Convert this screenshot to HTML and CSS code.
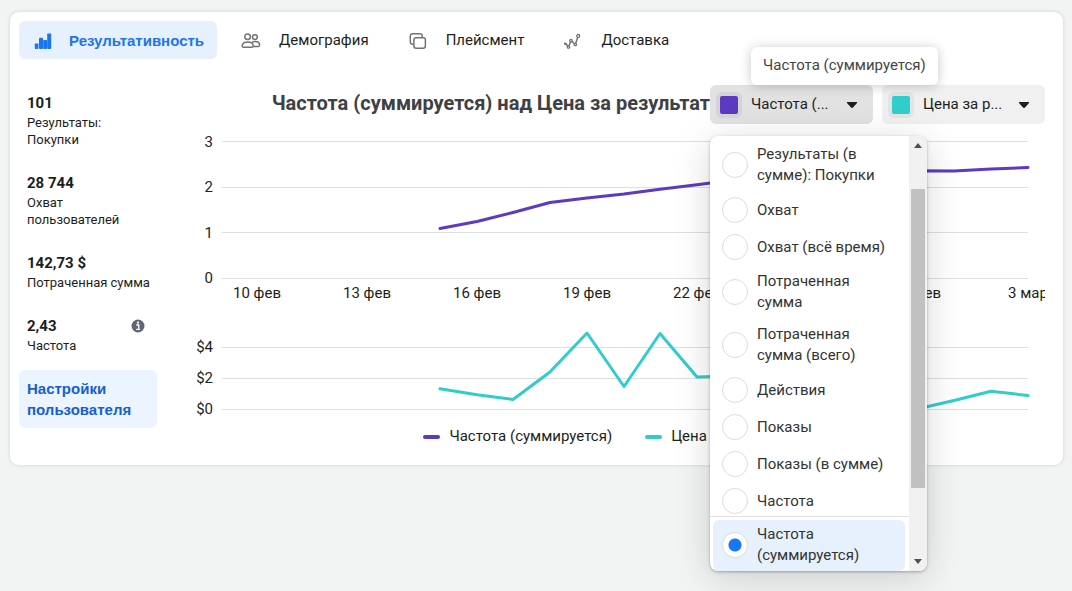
FILE: index.html
```html
<!DOCTYPE html>
<html lang="ru">
<head>
<meta charset="utf-8">
<title>Результативность</title>
<link rel="stylesheet" href="styles.css">
</head>
<body>
<main class="card">
  <nav class="tabs">
    <button class="tab tab-active" type="button">
      <svg class="tab-icon" viewBox="0 0 20 20" aria-hidden="true"><g fill="#1b74f0"><rect x="1.800" y="12.500" width="3.600" height="5.500" rx="0.800"/><rect x="6" y="6.700" width="4" height="11.300" rx="0.900"/><rect x="10.200" y="9" width="3.800" height="9" rx="0.800"/><rect x="14.200" y="2.400" width="4" height="15.600" rx="0.900"/></g></svg>
      <span>Результативность</span>
    </button>
    <button class="tab" type="button">
      <svg class="tab-icon" viewBox="0 0 20 20" aria-hidden="true"><g fill="none" stroke="#737373" stroke-width="1.500"><circle cx="6.600" cy="5.800" r="2.800"/><circle cx="13.900" cy="6.100" r="2.400"/><path d="M2.500 16.200h8.400c.8 0 1.300-.6 1.300-1.300 0-2.500-2.400-4-5.500-4s-5.500 1.500-5.500 4c0 .7.500 1.300 1.300 1.300z"/><path d="M11 11.300c.9-.5 1.900-.7 3-.7 2.700 0 4.600 1.400 4.600 3.500 0 .8-.5 1.300-1.200 1.300h-5.200"/></g></svg>
      <span>Демография</span>
    </button>
    <button class="tab" type="button">
      <svg class="tab-icon" viewBox="0 0 20 20" aria-hidden="true"><g fill="none" stroke="#737373" stroke-width="1.500"><path d="M5.500 13.200h-1a2.200 2.200 0 0 1-2.200-2.200v-6a2.200 2.200 0 0 1 2.200-2.200h7.500a2.200 2.200 0 0 1 2.200 2.200v1.500"/><rect x="5.900" y="6.800" width="11.500" height="10.400" rx="2.200"/></g></svg>
      <span>Плейсмент</span>
    </button>
    <button class="tab" type="button">
      <svg class="tab-icon" viewBox="0 0 20 20" aria-hidden="true"><g fill="none" stroke="#737373" stroke-width="1.500"><path d="M1.200 12.500l1.800.5 2.500 3 2.500-6.500 4.300 4 2.700-8"/></g><g fill="#fff" stroke="#737373" stroke-width="1.300"><circle cx="5.500" cy="16" r="1.200"/><circle cx="8" cy="9.600" r="1.200"/><circle cx="12.300" cy="13.500" r="1.200"/><circle cx="15.200" cy="5" r="1.500"/></g><circle cx="2.200" cy="12.800" r="1.300" fill="#737373"/></svg>
      <span>Доставка</span>
    </button>
  </nav>

  <div class="content">
    <aside class="side">
      <dl class="metrics">
        <div class="metric"><dt>101</dt><dd>Результаты: Покупки</dd></div>
        <div class="metric"><dt>28 744</dt><dd>Охват пользователей</dd></div>
        <div class="metric"><dt>142,73 $</dt><dd>Потраченная сумма</dd></div>
        <div class="metric">
          <dt>2,43
            <svg class="info" viewBox="0 0 14 14" aria-hidden="true"><circle cx="7" cy="7" r="6.500" fill="#606770"/><circle cx="7" cy="3.700" r="1.100" fill="#fff"/><path d="M5.300 6h2.500v4.200M5.200 10.400h3.700" fill="none" stroke="#fff" stroke-width="1.300"/></svg>
          </dt>
          <dd>Частота</dd>
        </div>
      </dl>
      <button class="settings" type="button">Настройки пользователя</button>
    </aside>

    <section class="chart">
      <header class="chart-head">
        <h2 class="title">Частота (суммируется) над Цена за результат</h2>
        <div class="pickers">
          <div class="picker-wrap">
            <button class="picker picker-open" type="button" aria-expanded="true">
              <span class="swatch swatch-a"></span><span class="picker-text">Частота (...</span>
              <svg class="caret" viewBox="0 0 12 8" aria-hidden="true"><path d="M1.500 1h9q1 0 .5 1l-4 4.500q-1 .8-2 0l-4-4.500q-.5-1 .5-1z" fill="#1c1e21"/></svg>
            </button>
            <div class="tooltip" role="tooltip">Частота (суммируется)</div>
            <div class="menu">
              <div class="options">
                <div class="option-list">
                  <label class="option"><input type="radio" name="metric">Результаты (в сумме): Покупки</label>
                  <label class="option"><input type="radio" name="metric">Охват</label>
                  <label class="option"><input type="radio" name="metric">Охват (всё время)</label>
                  <label class="option"><input type="radio" name="metric">Потраченная сумма</label>
                  <label class="option"><input type="radio" name="metric">Потраченная сумма (всего)</label>
                  <label class="option"><input type="radio" name="metric">Действия</label>
                  <label class="option"><input type="radio" name="metric">Показы</label>
                  <label class="option"><input type="radio" name="metric">Показы (в сумме)</label>
                  <label class="option"><input type="radio" name="metric">Частота</label>
                </div>
                <label class="option option-on"><input type="radio" name="metric" checked>Частота (суммируется)</label>
              </div>
              <div class="scrollbar" aria-hidden="true">
                <svg class="arrow" viewBox="0 0 8 5"><path d="M4 0l4 5H0z" fill="#505050"/></svg>
                <div class="track"><div class="thumb"></div></div>
                <svg class="arrow" viewBox="0 0 8 5"><path d="M0 0h8L4 5z" fill="#505050"/></svg>
              </div>
            </div>
          </div>
          <button class="picker" type="button">
            <span class="swatch swatch-b"></span><span class="picker-text">Цена за р...</span>
            <svg class="caret" viewBox="0 0 12 8" aria-hidden="true"><path d="M1.500 1h9q1 0 .5 1l-4 4.500q-1 .8-2 0l-4-4.500q-.5-1 .5-1z" fill="#1c1e21"/></svg>
          </button>
        </div>
      </header>

      <svg class="plot" viewBox="190 124 855 296">
        <path class="grid" d="M222 141.500H1028M222 187.500H1028M222 232.500H1028M222 278.500H1028M222 347.500H1028M222 378.500H1028M222 409.500H1028"/>
        <g class="labels y-labels">
          <text x="213" y="147">3</text><text x="213" y="192">2</text><text x="213" y="238">1</text><text x="213" y="283">0</text>
          <text x="213" y="352">$4</text><text x="213" y="383">$2</text><text x="213" y="414">$0</text>
        </g>
        <g class="labels x-labels">
          <text x="257" y="298">10 фев</text><text x="367" y="298">13 фев</text><text x="477" y="298">16 фев</text><text x="587" y="298">19 фев</text>
          <text x="697" y="298">22 фев</text><text x="807" y="298">25 фев</text><text x="917" y="298">28 фев</text><text x="1028" y="298">3 мар</text>
        </g>
        <polyline class="line line-a" points="440,228.500 477,221.500 513,212.500 550,202.500 587,198 624,194 660,189.300 697,184.800 734,180 770,176 807,174 844,172.500 880,171.500 917,170.800 954,171 991,169 1028,167.500"/>
        <polyline class="line line-b" points="440,388.800 477,394.800 513,399.500 550,372 587,333 624,386.500 660,333.500 697,377 734,376 770,385 807,392 844,398 880,404 917,409 954,400.500 991,391.300 1028,395.500"/>
      </svg>

      <div class="legend">
        <span class="key"><i class="dash dash-a"></i>Частота (суммируется)</span>
        <span class="key"><i class="dash dash-b"></i>Цена за результат</span>
      </div>
    </section>
  </div>
</main>
</body>
</html>
```

FILE: styles.css
```css
* { box-sizing: border-box; }
body {
  min-height: 100vh;
  margin: 0;
  padding: 12px 9px 20px 10px;
  background: #f2f4f4;
  color: #1c1e21;
  font: 15px/21px Roboto, "Liberation Sans", sans-serif;
}
button { border: 0; background: none; color: inherit; font: inherit; cursor: pointer; }
.card {
  padding: 9px 9px 18px;
  background: #fff;
  border-radius: 9px;
  box-shadow: 0 0 4px rgba(0, 0, 0, 0.14);
}
.tabs { display: flex; gap: 8px; }
.tab {
  display: flex;
  align-items: center;
  gap: 18px;
  height: 38px;
  padding: 0 15px 0 16px;
  border-radius: 6px;
}
.tab-active {
  gap: 16px;
  padding: 0 13px 0 14px;
  background: #e7f1fe;
  color: #1b74f0;
  font-family: "Liberation Sans", Arial, sans-serif;
  font-weight: 700;
}
.tab-icon { width: 20px; height: 20px; margin-top: 2px; }
.content { display: flex; gap: 33px; padding: 26px 9px 0 0; }
.side { flex: 0 0 138px; padding-top: 8px; }
.metrics { display: grid; gap: 25px; margin: 0 0 16px; padding: 0 0 0 8px; }
.metric dt {
  display: flex;
  align-items: center;
  justify-content: space-between;
  padding-right: 12px;
  font-weight: 700;
  line-height: 20px;
}
.metric dd { max-width: 126px; margin: 1px 0 0; font-size: 13px; line-height: 17px; }
.metric:nth-child(-n+2) dd { max-width: 100px; }
.info { width: 14px; height: 14px; }
.settings {
  width: 100%;
  padding: 8px;
  border-radius: 6px;
  background: #ecf4ff;
  color: #1560d0;
  font-family: "Liberation Sans", Arial, sans-serif;
  font-weight: 700;
  text-align: left;
}
.chart { flex: 1; min-width: 0; }
.chart-head { display: flex; justify-content: flex-end; align-items: center; }
.title {
  margin: 0;
  padding-bottom: 4px;
  color: #3f4043;
  font-size: 20px;
  line-height: 24px;
  font-weight: 700;
  white-space: nowrap;
}
.pickers { display: flex; gap: 9px; }
.picker-wrap { position: relative; }
.picker {
  display: flex;
  align-items: center;
  width: 163px;
  height: 39px;
  padding: 0 15px 0 6px;
  border-radius: 6px;
  background: #f0f0f0;
}
.picker-open { background: #e2e2e2; }
.swatch {
  width: 26px;
  height: 26px;
  border: 4px solid #e4e4e4;
  border-radius: 6px;
}
.picker-open .swatch { border-color: #d5d5d5; }
.swatch-a { background: #5d3abf; }
.swatch-b { background: #31cccc; }
.picker-text { flex: 1; padding-left: 9px; text-align: left; white-space: nowrap; }
.caret { width: 12px; height: 8px; }
.tooltip {
  position: absolute;
  left: 41px;
  bottom: 39px;
  z-index: 3;
  padding: 8px 12px 9px;
  border-radius: 6px;
  background: #fff;
  box-shadow: 0 1px 12px rgba(0, 0, 0, 0.22);
  color: #444;
  white-space: nowrap;
}
.menu {
  position: absolute;
  left: 0;
  top: 51px;
  z-index: 2;
  display: flex;
  width: 217px;
  overflow: hidden;
  border-radius: 8px;
  background: #fff;
  box-shadow: 0 1px 3px rgba(0, 0, 0, 0.3), 0 6px 36px rgba(0, 0, 0, 0.16);
  color: #333;
}
.options { flex: 1; padding-top: 3px; }
.option-list { height: 378px; border-bottom: 1px solid #e2e2e2; }
.option {
  display: flex;
  align-items: center;
  gap: 9px;
  margin: 0 4px 0 3px;
  padding: 5px 14px 6px 9px;
}
.option input {
  appearance: none;
  flex: none;
  width: 26px;
  height: 26px;
  margin: 0;
  border: 1px solid #dcdcdc;
  border-radius: 50%;
  background: #fff;
}
.option input:checked { background: radial-gradient(circle, #1877f2 6px, #fff 7px); }
.option-on { margin-top: 3px; padding: 4px 24px 5px 9px; border-radius: 6px; background: #e7f1fd; }
.scrollbar {
  display: flex;
  flex-direction: column;
  align-items: center;
  width: 18px;
  padding: 7px 0;
  background: #f1f1f1;
}
.arrow { width: 8px; height: 5px; }
.track { flex: 1; width: 14px; padding: 41px 0 0; }
.thumb { height: 299px; background: #c1c1c1; }
.plot { display: block; width: 100%; height: auto; }
.grid { fill: none; stroke: #dddfe0; }
.labels { fill: #1c1e21; font-size: 15px; }
.y-labels { text-anchor: end; }
.x-labels { text-anchor: middle; }
.line { fill: none; stroke-width: 3; stroke-linecap: round; stroke-linejoin: round; }
.line-a { stroke: #5d3abf; }
.line-b { stroke: #31cccc; }
.legend { display: flex; justify-content: center; gap: 33px; padding: 6px 12px 0 0; }
.key { display: flex; align-items: center; gap: 9px; }
.dash { width: 17px; height: 4px; border-radius: 2px; }
.dash-a { background: #5d3abf; }
.dash-b { background: #31cccc; }
```
